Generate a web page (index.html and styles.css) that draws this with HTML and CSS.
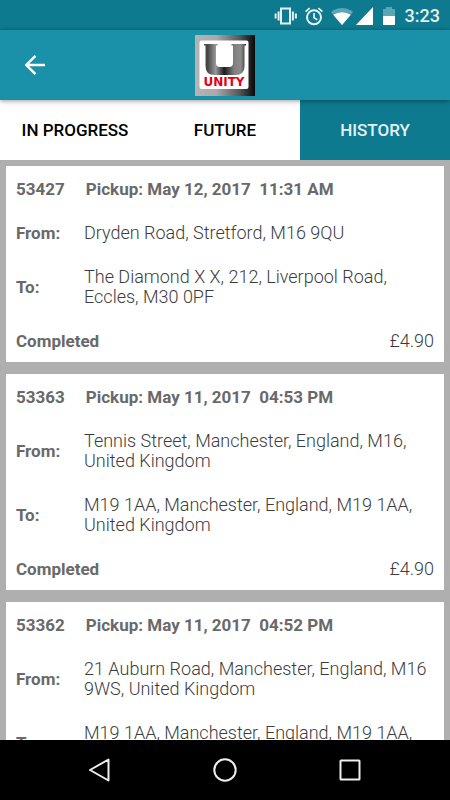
FILE: index.html
```html
<!DOCTYPE html>
<html lang="en">
<head>
<meta charset="utf-8">
<meta name="viewport" content="width=device-width, initial-scale=1">
<title>Unity bookings</title>
<link rel="stylesheet" href="styles.css">
</head>
<body>
<div class="status">
  <svg class="status-icons" width="124" height="20" viewBox="0 0 124 20" aria-hidden="true">
    <g fill="none" stroke="#e4f1f5" stroke-width="2">
      <rect x="7" y="2.500" width="9" height="15"/>
      <path d="M4.600 5.500v9M1.600 7.500v5M18.900 5.500v9M21.900 7.500v5"/>
      <circle cx="40" cy="11.300" r="7"/>
      <path d="M40 7v4.800l3.400 2M31.600 5.600l4-3.400M48.400 5.600l-4-3.400" stroke-width="1.700"/>
    </g>
    <path d="M57 6C63.500 .6 72.500 .6 79 6L68 19z" fill="#5ba5b4"/>
    <path d="M59.200 8.800Q68 3.500 76.800 8.800L68 19z" fill="#fff"/>
    <path d="M99 1v18H82z" fill="#fff"/>
    <path d="M109 3h3V1h6v2h3v8h-12z" fill="#5ba5b4"/>
    <path d="M109 10h12v9h-12z" fill="#fff"/>
  </svg>
  <span class="clock">3:23</span>
</div>
<header class="appbar">
  <button class="back" type="button" aria-label="Back">
    <svg width="20" height="20" viewBox="0 0 20 20"><path d="M20 10H1.500M10.500 .8L1.300 10l9.200 9.200" fill="none" stroke="#fff" stroke-width="2.400"/></svg>
  </button>
  <svg class="logo" width="60" height="61" viewBox="0 0 60 61" role="img" aria-label="Unity">
    <defs>
      <linearGradient id="frame"><stop offset="0" stop-color="#b4b4b4"/><stop offset=".35" stop-color="#aaa"/><stop offset=".75" stop-color="#555"/><stop offset="1" stop-color="#080808"/></linearGradient>
      <linearGradient id="metal"><stop offset="0" stop-color="#555"/><stop offset=".08" stop-color="#444"/><stop offset=".28" stop-color="#999"/><stop offset=".48" stop-color="#1c1c1c"/><stop offset=".72" stop-color="#808080"/><stop offset=".88" stop-color="#8c8c8c"/><stop offset="1" stop-color="#333"/></linearGradient>
    </defs>
    <rect width="60" height="61" fill="url(#frame)"/>
    <rect x="4.500" y="5.500" width="49" height="48.500" rx="2" fill="#fff"/>
    <path d="M9 9h13.500v1.500H21V28q0 4 4 4h9q4 0 4-4V10.500h-1.500V9H51v1.500h-1.500V31q0 9-9 9h-21q-9 0-9-9V10.500H9z" fill="url(#metal)"/>
    <text class="logo-name" x="29" y="51" text-anchor="middle">UNITY</text>
  </svg>
</header>
<nav class="tabs">
  <a class="tab" href="#progress">IN PROGRESS</a>
  <a class="tab" href="#future">FUTURE</a>
  <a class="tab active" href="#history" aria-current="page">HISTORY</a>
</nav>
<main class="list">
  <article class="card">
    <h2 class="heading"><span>53427</span><span class="pickup">Pickup: May 12, 2017  11:31 AM</span></h2>
    <dl class="route">
      <dt>From:</dt><dd>Dryden Road, Stretford, M16 9QU</dd>
      <dt>To:</dt><dd>The Diamond X X, 212, Liverpool Road, Eccles, M30 0PF</dd>
    </dl>
    <div class="summary"><strong>Completed</strong><span class="price">£4.90</span></div>
  </article>
  <article class="card">
    <h2 class="heading"><span>53363</span><span class="pickup">Pickup: May 11, 2017  04:53 PM</span></h2>
    <dl class="route">
      <dt>From:</dt><dd>Tennis Street, Manchester, England, M16, United Kingdom</dd>
      <dt>To:</dt><dd>M19 1AA, Manchester, England, M19 1AA, United Kingdom</dd>
    </dl>
    <div class="summary"><strong>Completed</strong><span class="price">£4.90</span></div>
  </article>
  <article class="card">
    <h2 class="heading"><span>53362</span><span class="pickup">Pickup: May 11, 2017  04:52 PM</span></h2>
    <dl class="route">
      <dt>From:</dt><dd>21 Auburn Road, Manchester, England, M16 9WS, United Kingdom</dd>
      <dt>To:</dt><dd>M19 1AA, Manchester, England, M19 1AA, United Kingdom</dd>
    </dl>
    <div class="summary"><strong>Completed</strong><span class="price">£4.90</span></div>
  </article>
</main>
<footer class="sysnav">
  <button type="button" aria-label="Back"><svg width="24" height="24" viewBox="0 0 24 24"><path d="M20.500 1.500v21L2 12z"/></svg></button>
  <button type="button" aria-label="Home"><svg width="24" height="24" viewBox="0 0 24 24"><circle cx="12" cy="12" r="10.700"/></svg></button>
  <button type="button" aria-label="Recent apps"><svg width="24" height="24" viewBox="0 0 24 24"><rect x="2.500" y="2.500" width="19" height="19" rx=".5"/></svg></button>
</footer>
</body>
</html>
```
FILE: styles.css
```css
* {
  box-sizing: border-box;
}

body {
  margin: 0;
  height: 100vh;
  display: flex;
  flex-direction: column;
  overflow: hidden;
  background: #afafaf;
  color: #696969;
  font: 400 17px/20px Roboto, sans-serif;
}

button {
  padding: 0;
  border: 0;
  background: none;
  display: flex;
}

.status {
  flex: none;
  display: flex;
  align-items: center;
  justify-content: flex-end;
  gap: 7px;
  height: 30px;
  padding: 1px 10px 0;
  background: #0e7a8f;
}

.clock {
  color: #e4f1f5;
  font-size: 18px;
  font-weight: 500;
}

.appbar {
  flex: none;
  position: relative;
  z-index: 1;
  display: grid;
  grid-template-columns: 1fr auto 1fr;
  align-items: center;
  height: 70px;
  padding: 0 25px;
  background: #1a90a9;
  box-shadow: 0 1px 5px rgba(0, 0, 0, 0.4);
}

.logo-name {
  fill: #e3000f;
  font: bold 12px "DejaVu Sans", sans-serif;
}

.tabs {
  flex: none;
  display: grid;
  grid-template-columns: repeat(3, 1fr);
  height: 60px;
  background: #fff;
}

.tab {
  display: flex;
  align-items: center;
  justify-content: center;
  color: #000;
  font-weight: 500;
  text-decoration: none;
}

.tab.active {
  background: #0e7a8f;
  color: #e4f1f5;
}

.list {
  flex: 1;
  min-height: 0;
  overflow: hidden;
  display: flex;
  flex-direction: column;
  gap: 12px;
  padding: 6px;
}

.card {
  flex: none;
  display: flex;
  flex-direction: column;
  gap: 24px;
  padding: 13px 10px 11px;
  background: #fff;
}

.heading {
  display: flex;
  gap: 21px;
  margin: 0;
  font-size: 17px;
  font-weight: 700;
}

.pickup {
  white-space: pre;
}

.route {
  display: grid;
  grid-template-columns: 48px 1fr;
  gap: 24px 20px;
  align-items: center;
  margin: 0;
}

.route dt {
  font-weight: 700;
}

.route dd {
  margin: 0;
}

.route dd,
.price {
  color: #3c3c3c;
  font-size: 18px;
  font-weight: 300;
}

.summary {
  display: flex;
  justify-content: space-between;
}

.sysnav {
  flex: none;
  display: flex;
  align-items: center;
  justify-content: center;
  gap: 101px;
  height: 60px;
  background: #000;
}

.sysnav svg {
  fill: none;
  stroke: #eee;
  stroke-width: 2;
  stroke-linejoin: round;
}
```
